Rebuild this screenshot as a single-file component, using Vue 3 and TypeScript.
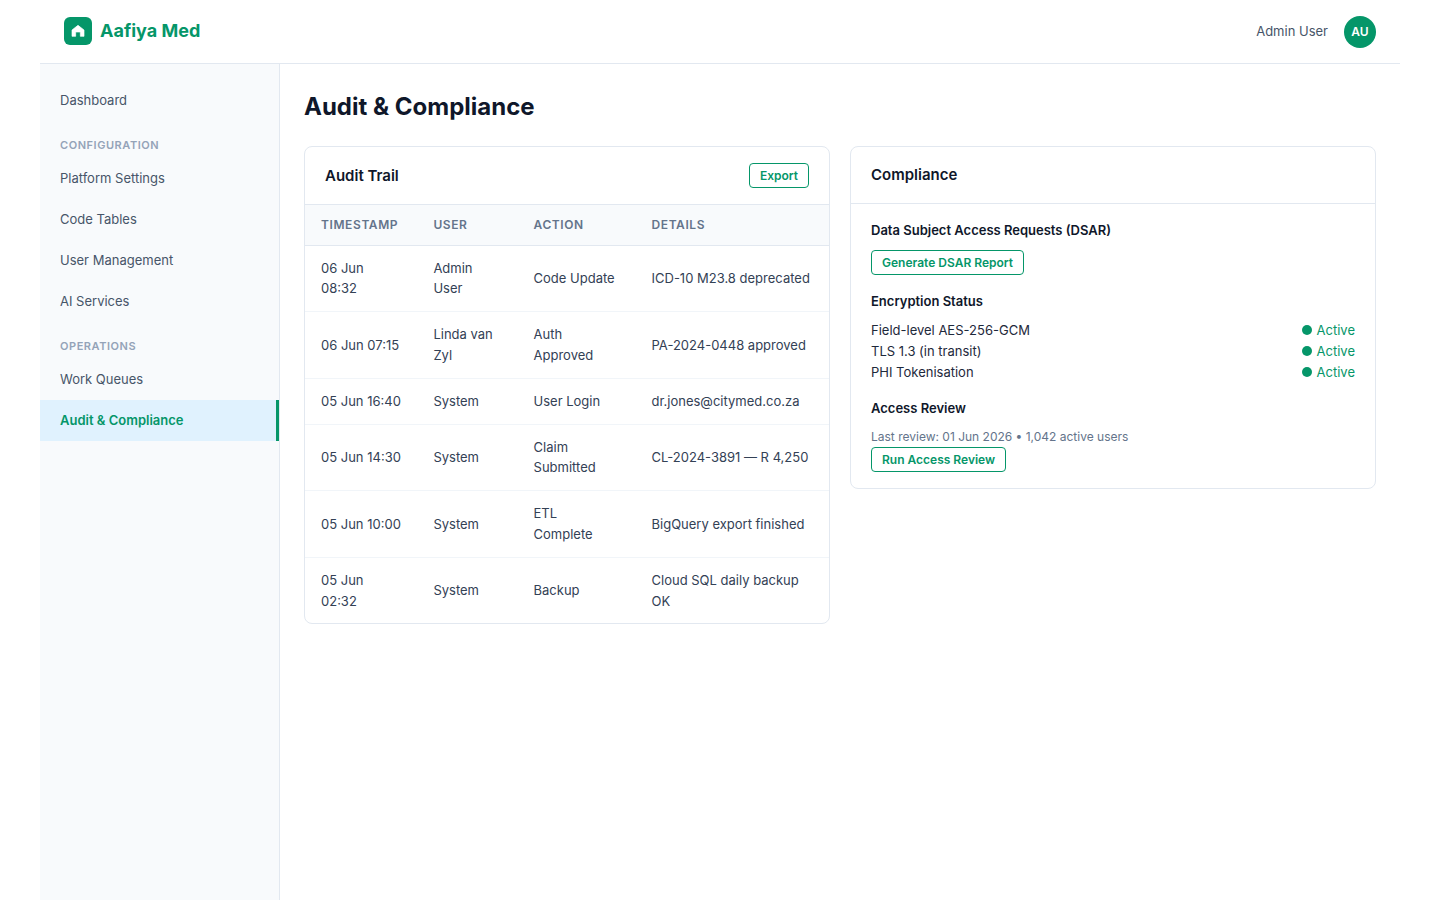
<script setup lang="ts">
type NavItem = { label: string; active?: boolean }
type NavGroup = { title?: string; items: NavItem[] }
type AuditRow = { time: string; user: string; action: string; details: string }

const navGroups: NavGroup[] = [
  { items: [{ label: 'Dashboard' }] },
  {
    title: 'Configuration',
    items: [
      { label: 'Platform Settings' },
      { label: 'Code Tables' },
      { label: 'User Management' },
      { label: 'AI Services' },
    ],
  },
  {
    title: 'Operations',
    items: [{ label: 'Work Queues' }, { label: 'Audit & Compliance', active: true }],
  },
]

const auditRows: AuditRow[] = [
  { time: '06 Jun 08:32', user: 'Admin User', action: 'Code Update', details: 'ICD-10 M23.8 deprecated' },
  { time: '06 Jun 07:15', user: 'Linda van Zyl', action: 'Auth Approved', details: 'PA-2024-0448 approved' },
  { time: '05 Jun 16:40', user: 'System', action: 'User Login', details: 'dr.jones@citymed.co.za' },
  { time: '05 Jun 14:30', user: 'System', action: 'Claim Submitted', details: 'CL-2024-3891 — R 4,250' },
  { time: '05 Jun 10:00', user: 'System', action: 'ETL Complete', details: 'BigQuery export finished' },
  { time: '05 Jun 02:32', user: 'System', action: 'Backup', details: 'Cloud SQL daily backup OK' },
]

const encryption = ['Field-level AES-256-GCM', 'TLS 1.3 (in transit)', 'PHI Tokenisation']
</script>

<template>
  <div class="app">
    <header class="topbar">
      <div class="brand">
        <span class="logo">
          <svg width="16" height="16" viewBox="0 0 24 24" fill="#fff" stroke="#fff" stroke-width="1" stroke-linejoin="round">
            <path d="M3 10.5 12 3.5l9 7V20h-5.5v-6.5h-7V20H3z" />
          </svg>
        </span>
        <span class="brand-name">Aafiya Med</span>
      </div>
      <div class="account">
        <span class="account-name">Admin User</span>
        <span class="avatar">AU</span>
      </div>
    </header>

    <div class="layout">
      <aside class="sidebar">
        <template v-for="group in navGroups" :key="group.title ?? 'top'">
          <div v-if="group.title" class="nav-title">{{ group.title }}</div>
          <a
            v-for="item in group.items"
            :key="item.label"
            class="nav-item"
            :class="{ active: item.active }"
          >{{ item.label }}</a>
        </template>
      </aside>

      <main class="content">
        <h1>Audit &amp; Compliance</h1>
        <div class="columns">
          <section class="card">
            <div class="card-head">
              <h2>Audit Trail</h2>
              <button class="btn">Export</button>
            </div>
            <table>
              <thead>
                <tr>
                  <th>Timestamp</th>
                  <th>User</th>
                  <th>Action</th>
                  <th>Details</th>
                </tr>
              </thead>
              <tbody>
                <tr v-for="row in auditRows" :key="row.time">
                  <td>{{ row.time }}</td>
                  <td>{{ row.user }}</td>
                  <td>{{ row.action }}</td>
                  <td>{{ row.details }}</td>
                </tr>
              </tbody>
            </table>
          </section>

          <section class="card">
            <div class="card-head">
              <h2>Compliance</h2>
            </div>
            <div class="card-body">
              <div class="block">
                <h3>Data Subject Access Requests (DSAR)</h3>
                <button class="btn">Generate DSAR Report</button>
              </div>
              <div class="block">
                <h3>Encryption Status</h3>
                <div v-for="name in encryption" :key="name" class="enc-row">
                  <span>{{ name }}</span>
                  <span class="status"><i class="dot"></i>Active</span>
                </div>
              </div>
              <div class="block">
                <h3>Access Review</h3>
                <p class="muted">Last review: 01 Jun 2026 • 1,042 active users</p>
                <button class="btn">Run Access Review</button>
              </div>
            </div>
          </section>
        </div>
      </main>
    </div>
  </div>
</template>

<style>
html,
body {
  margin: 0;
  background: #fff;
}
</style>

<style scoped>
.app {
  max-width: 1360px;
  margin: 0 auto;
  font-family: Inter, 'Liberation Sans', sans-serif;
  font-size: 13px;
  line-height: 1.6;
  color: #1e293b;
}

.topbar {
  height: 64px;
  box-sizing: border-box;
  display: flex;
  align-items: center;
  justify-content: space-between;
  padding: 0 24px;
  border-bottom: 1px solid #e2e8f0;
}

.brand {
  display: flex;
  align-items: center;
  gap: 8px;
}

.logo {
  width: 28px;
  height: 28px;
  display: grid;
  place-items: center;
  border-radius: 6px;
  background: #059669;
}

.brand-name {
  color: #059669;
  font-size: 18px;
  font-weight: 700;
}

.account {
  display: flex;
  align-items: center;
  gap: 16px;
}

.account-name {
  color: #475569;
}

.avatar {
  width: 32px;
  height: 32px;
  display: grid;
  place-items: center;
  border-radius: 50%;
  background: #059669;
  color: #fff;
  font-size: 12px;
  font-weight: 600;
}

.layout {
  display: flex;
}

.sidebar {
  width: 240px;
  min-height: calc(100vh - 64px);
  box-sizing: border-box;
  flex-shrink: 0;
  padding-top: 16px;
  background: #f8fafc;
  border-right: 1px solid #e2e8f0;
}

.nav-title {
  padding: 16px 20px 4px;
  color: #94a3b8;
  font-size: 11px;
  font-weight: 600;
  letter-spacing: 0.05em;
  text-transform: uppercase;
}

.nav-item {
  display: block;
  padding: 10px 20px;
  color: #475569;
}

.nav-item.active {
  background: #e0f2fe;
  border-right: 3px solid #059669;
  color: #059669;
  font-weight: 600;
}

.content {
  flex: 1;
  min-width: 0;
  padding: 24px;
}

h1 {
  margin: 0 0 20px;
  color: #0f172a;
  font-size: 24px;
  font-weight: 700;
}

.columns {
  display: grid;
  grid-template-columns: 1fr 1fr;
  gap: 20px;
  align-items: start;
}

.card {
  background: #fff;
  border: 1px solid #e2e8f0;
  border-radius: 8px;
  overflow: hidden;
}

.card-head {
  display: flex;
  align-items: center;
  justify-content: space-between;
  padding: 16px 20px;
  border-bottom: 1px solid #e2e8f0;
}

h2 {
  margin: 0;
  color: #0f172a;
  font-size: 15px;
  font-weight: 600;
}

.btn {
  padding: 4px 10px;
  background: #fff;
  border: 1px solid #059669;
  border-radius: 4px;
  color: #059669;
  font-family: inherit;
  font-size: 12px;
  font-weight: 600;
}

.block > .btn {
  margin-top: 1px;
}

table {
  width: 100%;
  border-collapse: collapse;
}

th {
  padding: 10px 16px;
  background: #f8fafc;
  border-bottom: 1px solid #e2e8f0;
  color: #64748b;
  font-size: 12px;
  font-weight: 600;
  letter-spacing: 0.05em;
  text-align: left;
  text-transform: uppercase;
}

td {
  padding: 12px 16px;
  border-bottom: 1px solid #f1f5f9;
  color: #334155;
}

tbody tr:last-child td {
  border-bottom: 0;
}

.card-body {
  padding: 16px 20px;
}

.block {
  margin-bottom: 16px;
}

.block:last-child {
  margin-bottom: 0;
}

h3 {
  margin: 0 0 8px;
  color: #0f172a;
  font-size: 13px;
  font-weight: 600;
}

.enc-row {
  display: flex;
  justify-content: space-between;
}

.status {
  display: inline-flex;
  align-items: center;
  gap: 5px;
  color: #059669;
}

.dot {
  width: 10px;
  height: 10px;
  border-radius: 50%;
  background: #059669;
}

.muted {
  margin: 0;
  color: #64748b;
  font-size: 12px;
}
</style>
